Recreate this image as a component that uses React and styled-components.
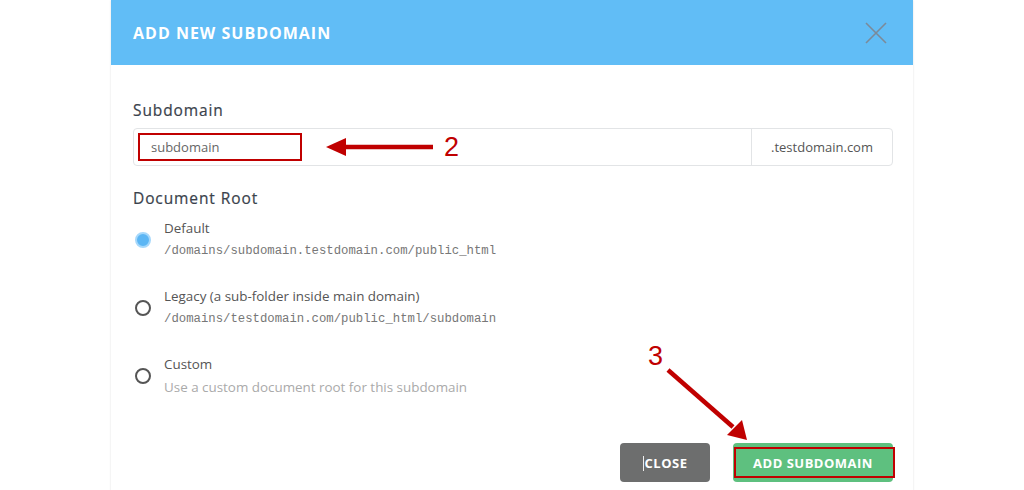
import React, { useState } from 'react';
import styled, { createGlobalStyle } from 'styled-components';

const GlobalStyle = createGlobalStyle`
  body {
    margin: 0;
    background: #fff;
    font-family: "Open Sans", "Liberation Sans", sans-serif;
  }
`;

const Page = styled.div`
  position: relative;
  width: 1024px;
  height: 490px;
  overflow: hidden;
`;

const Modal = styled.div`
  width: 802px;
  margin: 0 auto;
  background: #fff;
  box-shadow: 0 0 2px rgba(0, 0, 0, 0.12);
  min-height: 520px;
`;

const Header = styled.div`
  height: 65px;
  background: #61bdf6;
  display: flex;
  align-items: center;
  justify-content: space-between;
  padding: 0 26px 0 22px;
`;

const Title = styled.h2`
  margin: 0;
  color: #fff;
  font-size: 16px;
  font-weight: 700;
  letter-spacing: 1px;
`;

const CloseIcon = styled.button`
  border: none;
  background: none;
  padding: 0;
  width: 22px;
  height: 22px;
  display: flex;
  cursor: pointer;
`;

const Body = styled.div`
  padding: 35px 20px 0 22px;
`;

const Label = styled.div`
  font-size: 15.5px;
  line-height: 20px;
  font-weight: 400;
  color: #3a424c;
  letter-spacing: 0.9px;
  -webkit-text-stroke: 0.2px #3a424c;
  margin-bottom: ${props => props.gap || 8}px;
`;

const InputGroup = styled.div`
  display: flex;
  height: 38px;
  border: 1px solid #e2e4e6;
  border-radius: 4px;
  box-sizing: border-box;
  margin-bottom: 22px;
`;

const InputWrap = styled.div`
  position: relative;
  flex: 1;
  display: flex;
`;

const Input = styled.input`
  flex: 1;
  border: none;
  outline: none;
  background: transparent;
  padding: 0 17px;
  font-family: "Open Sans", sans-serif;
  font-size: 13px;
  color: #666;
`;

const Highlight = styled.span`
  position: absolute;
  left: ${props => props.left}px;
  top: ${props => props.top}px;
  width: ${props => props.w}px;
  height: ${props => props.h}px;
  border: 2.5px solid #c00000;
  box-sizing: border-box;
  pointer-events: none;
`;

const Addon = styled.div`
  width: 140px;
  border-left: 1px solid #e2e4e6;
  display: flex;
  align-items: center;
  justify-content: center;
  font-size: 13px;
  color: #555;
`;

const Options = styled.div`
  display: flex;
  flex-direction: column;
  gap: 27px;
  padding-left: 2px;
`;

const Option = styled.label`
  display: flex;
  align-items: center;
  gap: 13px;
  cursor: pointer;
`;

const Radio = styled.span`
  width: 16px;
  height: 16px;
  border-radius: 50%;
  box-sizing: border-box;
  flex-shrink: 0;
  border: ${props => (props.checked ? '2px solid #a6d8fb' : '2px solid #555')};
  background: ${props => (props.checked ? '#5cb6f4' : '#fff')};
`;

const OptionText = styled.div`
  display: flex;
  flex-direction: column;
  gap: 5px;
`;

const OptionTitle = styled.div`
  font-size: 13.4px;
  line-height: 18px;
  color: #555;
`;

const OptionDesc = styled.div`
  font-family: ${props => (props.mono ? '"Liberation Mono", monospace' : '"Open Sans", sans-serif')};
  font-size: ${props => (props.mono ? '12.3px' : '13.4px')};
  line-height: 18px;
  color: ${props => (props.mono ? '#777' : '#aaa')};
`;

const Footer = styled.div`
  display: flex;
  justify-content: flex-end;
  gap: 23px;
  margin-top: 47px;
`;

const Button = styled.button`
  position: relative;
  height: 39px;
  width: ${props => props.w}px;
  border: none;
  border-radius: 4px;
  color: #fff;
  background: ${props => (props.primary ? '#5ec07f' : '#6d6e6e')};
  font-family: "Open Sans", sans-serif;
  font-size: 13px;
  font-weight: 700;
  letter-spacing: 0.5px;
  cursor: pointer;
`;

const Caret = styled.span`
  display: inline-block;
  width: 1px;
  height: 15px;
  background: #eee;
  vertical-align: -3px;
  margin-right: 1px;
`;

const Annotations = styled.svg`
  position: absolute;
  left: 0;
  top: 0;
  pointer-events: none;
`;

const Marker = styled.span`
  position: absolute;
  left: ${props => props.x}px;
  top: ${props => props.y}px;
  font-family: "Liberation Sans", sans-serif;
  font-size: 27px;
  line-height: 1;
  color: #c00000;
`;

const options = [
  { id: 'default', title: 'Default', desc: '/domains/subdomain.testdomain.com/public_html', mono: true },
  { id: 'legacy', title: 'Legacy (a sub-folder inside main domain)', desc: '/domains/testdomain.com/public_html/subdomain', mono: true },
  { id: 'custom', title: 'Custom', desc: 'Use a custom document root for this subdomain' },
];

export default function App() {
  const [name, setName] = useState('subdomain');
  const [root, setRoot] = useState('default');

  return (
    <Page>
      <GlobalStyle />
      <Modal>
        <Header>
          <Title>ADD NEW SUBDOMAIN</Title>
          <CloseIcon aria-label="Close">
            <svg width="22" height="22" viewBox="0 0 22 22">
              <path d="M1 1 L21 21 M21 1 L1 21" stroke="#7b8a99" strokeWidth="1.6" fill="none" />
            </svg>
          </CloseIcon>
        </Header>
        <Body>
          <Label>Subdomain</Label>
          <InputGroup>
            <InputWrap>
              <Input value={name} onChange={(e) => setName(e.target.value)} />
              <Highlight left={4} top={4} w={164} h={28} />
            </InputWrap>
            <Addon>.testdomain.com</Addon>
          </InputGroup>
          <Label gap={11}>Document Root</Label>
          <Options>
            {options.map((o) => (
              <Option key={o.id} onClick={() => setRoot(o.id)}>
                <Radio checked={root === o.id} />
                <OptionText>
                  <OptionTitle>{o.title}</OptionTitle>
                  <OptionDesc mono={o.mono}>{o.desc}</OptionDesc>
                </OptionText>
              </Option>
            ))}
          </Options>
          <Footer>
            <Button w={90}><Caret />CLOSE</Button>
            <Button w={160} primary>
              ADD SUBDOMAIN
              <Highlight left={1} top={4} w={161} h={31} />
            </Button>
          </Footer>
        </Body>
      </Modal>

      <Annotations width="1024" height="490">
        <line x1="343" y1="147" x2="433" y2="147" stroke="#c00000" strokeWidth="4.5" />
        <polygon points="326,147 346,138 346,156" fill="#c00000" />
        <line x1="668" y1="370" x2="733" y2="427" stroke="#c00000" strokeWidth="4.5" />
        <polygon points="747,440 727,435 742,420" fill="#c00000" />
      </Annotations>
      <Marker x={444} y={134}>2</Marker>
      <Marker x={648} y={343}>3</Marker>
    </Page>
  );
}
